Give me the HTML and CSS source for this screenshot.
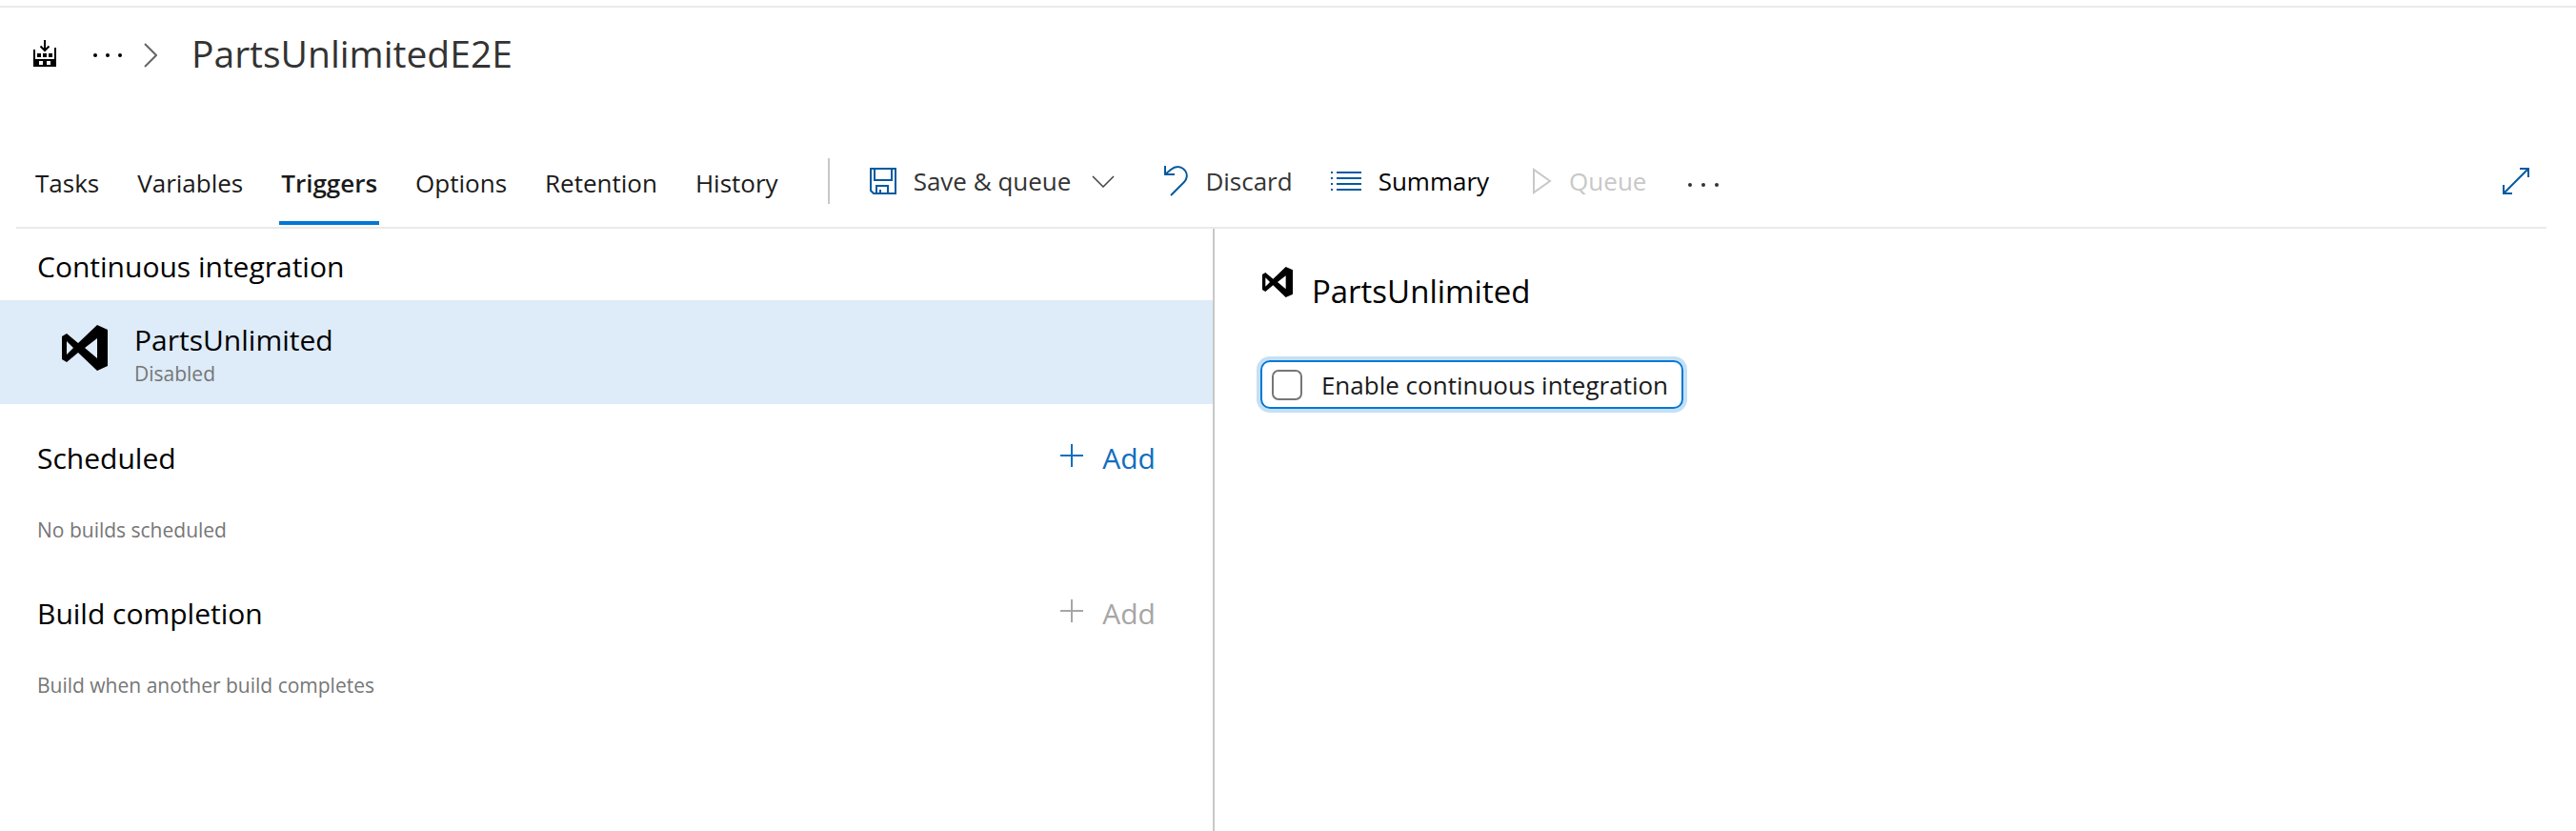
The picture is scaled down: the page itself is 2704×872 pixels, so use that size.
FILE: index.html
```html
<!DOCTYPE html>
<html lang="en">
<head>
<meta charset="utf-8">
<title>PartsUnlimitedE2E</title>
<link rel="stylesheet" href="styles.css">
</head>
<body>
<svg class="sprite" aria-hidden="true">
  <symbol id="vs-logo" viewBox="0 0 48 48">
    <path fill-rule="evenodd" d="M0 12 5 9 17 19 37 0 48 5V43L37 48 17 29 5 39 0 36ZM5 17V31L12 24ZM37 14 24 24 37 35Z"/>
  </symbol>
  <symbol id="plus" viewBox="0 0 24 24">
    <path d="M12 0V24M0 12H24" fill="none" stroke="currentColor" stroke-width="2"/>
  </symbol>
</svg>

<header class="header">
  <svg class="factory" viewBox="0 0 24 28" aria-hidden="true">
    <path d="M12 0V11M7.500 6.500 12 11 16.500 6.500" fill="none" stroke="#000" stroke-width="2"/>
    <path fill-rule="evenodd" d="M0 10H2V18H22V8H24V28H0ZM6 22V26H10V22ZM14 22V26H18V22Z"/>
    <path d="M4 14H8V18H4ZM10 14H14V18H10ZM16 14H20V18H16Z"/>
    <path d="M2 18H22V20H2Z" fill="#fff"/>
    <path d="M0 20H24V22H0Z"/>
  </svg>
  <button class="crumb-more" type="button" aria-label="More">
    <svg class="dots-small" viewBox="0 0 30 4" aria-hidden="true"><circle cx="2" cy="2" r="2"/><circle cx="15" cy="2" r="2"/><circle cx="28" cy="2" r="2"/></svg>
  </button>
  <svg class="crumb-chevron" viewBox="0 0 14 26" aria-hidden="true"><path d="M1 1 13 13 1 25" fill="none" stroke="#666" stroke-width="2"/></svg>
  <h1 class="title">PartsUnlimitedE2E</h1>
</header>

<div class="toolbar">
  <nav class="tabs">
    <a class="tab" href="#tasks">Tasks</a>
    <a class="tab" href="#variables">Variables</a>
    <a class="tab tab-active" href="#triggers" aria-current="page">Triggers</a>
    <a class="tab" href="#options">Options</a>
    <a class="tab" href="#retention">Retention</a>
    <a class="tab" href="#history">History</a>
  </nav>
  <div class="actions">
    <button class="action save" type="button">
      <svg class="icon-save" viewBox="0 0 28 28" aria-hidden="true"><path d="M1 1H27V27H4L1 24ZM5 1V13H23V1M7 27V19H19V27M11 27V23" fill="none" stroke="currentColor" stroke-width="2"/></svg>
      <span>Save &amp; queue</span>
      <svg class="icon-down" viewBox="0 0 24 13" aria-hidden="true"><path d="M1 1 12 12 23 1" fill="none" stroke="#444" stroke-width="1.500"/></svg>
    </button>
    <button class="action discard" type="button">
      <svg class="icon-undo" viewBox="0 0 25 32" aria-hidden="true"><path d="M1 0V9H11M1 9 7 4C12 0 18 0 22 5 25 9 24 14 21 17L7 31" fill="none" stroke="currentColor" stroke-width="2"/></svg>
      <span>Discard</span>
    </button>
    <button class="action summary" type="button">
      <svg class="icon-list" viewBox="0 0 32 20" aria-hidden="true"><path d="M0 1H2M6 1H32M0 7H2M6 7H32M0 13H2M6 13H32M0 19H2M6 19H32" fill="none" stroke="currentColor" stroke-width="2"/></svg>
      <span>Summary</span>
    </button>
    <button class="action queue" type="button" disabled>
      <svg class="icon-play" viewBox="0 0 20 28" aria-hidden="true"><path d="M1 2V26L18 14Z" fill="none" stroke="currentColor" stroke-width="2"/></svg>
      <span>Queue</span>
    </button>
    <button class="action more" type="button" aria-label="More actions">
      <svg class="dots" viewBox="0 0 32 4" aria-hidden="true"><circle cx="2" cy="2" r="2"/><circle cx="16" cy="2" r="2"/><circle cx="30" cy="2" r="2"/></svg>
    </button>
  </div>
  <button class="action expand" type="button" aria-label="Full screen">
    <svg class="icon-expand" viewBox="0 0 28 28" aria-hidden="true"><path d="M1 27 27 1M18 1H27V10M1 18V27H10" fill="none" stroke="currentColor" stroke-width="2"/></svg>
  </button>
</div>

<main class="content">
  <section class="triggers">
    <h2 class="heading heading-first">Continuous integration</h2>
    <a class="repo" href="#partsunlimited">
      <svg class="repo-logo" aria-hidden="true"><use href="#vs-logo"/></svg>
      <span class="repo-text">
        <span class="repo-name">PartsUnlimited</span>
        <span class="repo-state">Disabled</span>
      </span>
    </a>
    <div class="group">
      <div class="group-head">
        <h2 class="heading">Scheduled</h2>
        <button class="add" type="button"><svg class="icon-plus" aria-hidden="true"><use href="#plus"/></svg>Add</button>
      </div>
      <p class="hint">No builds scheduled</p>
    </div>
    <div class="group">
      <div class="group-head">
        <h2 class="heading">Build completion</h2>
        <button class="add" type="button" disabled><svg class="icon-plus" aria-hidden="true"><use href="#plus"/></svg>Add</button>
      </div>
      <p class="hint">Build when another build completes</p>
    </div>
  </section>
  <section class="detail">
    <div class="detail-head">
      <svg class="detail-logo" aria-hidden="true"><use href="#vs-logo"/></svg>
      <h2 class="detail-title">PartsUnlimited</h2>
    </div>
    <label class="check" for="enable-ci">
      <input class="check-box" type="checkbox" id="enable-ci">
      <span>Enable continuous integration</span>
    </label>
  </section>
</main>
</body>
</html>
```

FILE: styles.css
```css
* {
  box-sizing: border-box;
}

body {
  display: flex;
  flex-direction: column;
  min-height: 100vh;
  margin: 0;
  padding-top: 6px;
  background: #fff;
  color: #000;
  font-family: "Open Sans", "Noto Sans", sans-serif;
  font-size: 26px;
}

h1,
h2,
p {
  margin: 0;
  font-weight: 400;
}

svg {
  display: block;
  flex: none;
}

button {
  padding: 0;
  border: 0;
  background: none;
  font: inherit;
}

a {
  color: inherit;
  text-decoration: none;
}

.sprite {
  position: absolute;
  width: 0;
  height: 0;
}

.header {
  display: flex;
  align-items: center;
  height: 98px;
  padding-left: 35px;
  border-top: 2px solid #eaeaea;
}

.factory {
  width: 24px;
  height: 28px;
}

.crumb-more {
  margin-left: 39px;
  padding-top: 4px;
}

.dots-small {
  width: 30px;
  height: 4px;
}

.crumb-chevron {
  width: 14px;
  height: 26px;
  margin: 4px 0 0 23px;
}

.title {
  margin-left: 36px;
  color: #333;
  font-size: 39px;
  line-height: 54px;
}

.toolbar {
  display: flex;
  align-items: flex-start;
  margin: 0 31px 0 17px;
  padding: 48px 18px 2px;
  border-bottom: 2px solid #eaeaea;
}

.tabs {
  display: flex;
  gap: 36px;
}

.tab {
  padding: 0 2px;
  border-bottom: 4px solid transparent;
  color: #1a1a1a;
  line-height: 80px;
}

.tab-active {
  border-bottom-color: #0078d4;
  font-weight: 600;
}

.actions {
  display: flex;
  align-items: center;
  gap: 40px;
  height: 48px;
  margin: 14px 0 0 50px;
  padding-left: 42px;
  border-left: 2px solid #c8c8c8;
}

.action {
  display: flex;
  align-items: center;
  gap: 18px;
  color: #333;
  line-height: 48px;
}

.action svg {
  color: #005a9e;
}

.save {
  margin-right: 12px;
}

.summary {
  margin-right: 6px;
  color: #000;
}

.queue {
  margin-right: 4px;
}

.queue,
.queue svg {
  color: #c8c8c8;
}

.more {
  padding-top: 8px;
}

.expand {
  margin: 14px 0 0 auto;
  height: 48px;
}

.icon-save,
.icon-expand {
  width: 28px;
  height: 28px;
}

.icon-down {
  width: 24px;
  height: 13px;
  margin-left: 4px;
}

.icon-undo {
  width: 25px;
  height: 32px;
}

.icon-list {
  width: 32px;
  height: 20px;
}

.icon-play {
  width: 20px;
  height: 28px;
}

.dots {
  width: 32px;
  height: 4px;
  fill: #333;
}

.content {
  display: grid;
  flex: 1;
  grid-template-columns: 47.15% 1fr;
}

.triggers {
  border-right: 2px solid #c8c8c8;
}

.heading {
  font-size: 30px;
  line-height: 40px;
}

.heading-first {
  padding: 20px 39px 15px;
}

.repo {
  display: flex;
  gap: 28px;
  padding: 21px 65px 18px;
  background: #deebf8;
}

.repo-logo {
  width: 48px;
  height: 48px;
  margin-top: 5px;
}

.repo-text {
  display: flex;
  flex-direction: column;
}

.repo-name {
  font-size: 30px;
  line-height: 42px;
}

.repo-state {
  color: #767676;
  font-size: 21px;
  line-height: 28px;
}

.group {
  height: 163px;
  padding: 37px 60px 0 39px;
}

.group-head {
  display: flex;
  align-items: center;
  justify-content: space-between;
}

.add {
  display: flex;
  align-items: flex-start;
  gap: 20px;
  color: #106ebe;
  font-size: 30px;
  line-height: 40px;
}

.add:disabled {
  color: #a6a6a6;
}

.icon-plus {
  width: 24px;
  height: 24px;
  margin-top: 5px;
}

.hint {
  margin-top: 40px;
  color: #767676;
  font-size: 21px;
  line-height: 30px;
}

.detail {
  padding: 40px 48px;
}

.detail-head {
  display: flex;
  align-items: flex-start;
  gap: 20px;
  padding-left: 2px;
}

.detail-logo {
  width: 32px;
  height: 32px;
}

.detail-title {
  font-size: 33px;
  line-height: 52px;
}

.check {
  display: inline-flex;
  align-items: center;
  gap: 20px;
  height: 51px;
  margin-top: 46px;
  padding: 0 14px 0 10px;
  border: 2px solid #0078d4;
  border-radius: 10px;
  box-shadow: 0 0 0 4px #c5e0f5;
  color: #1a1a1a;
}

.check-box {
  width: 32px;
  height: 32px;
  margin: 0;
  border: 2px solid #767676;
  border-radius: 7px;
  background: #fff;
  appearance: none;
}
```
